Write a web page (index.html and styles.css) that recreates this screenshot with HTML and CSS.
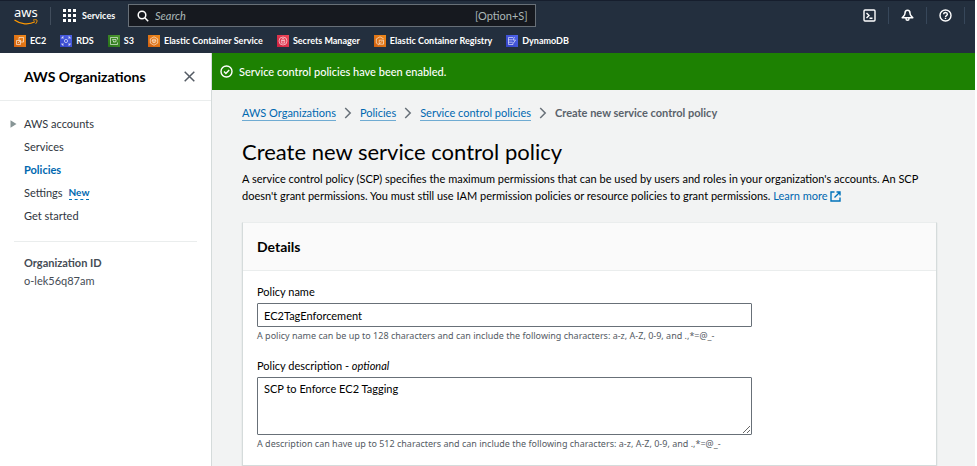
FILE: index.html
```html
<!DOCTYPE html>
<html lang="en">
<head>
<meta charset="utf-8">
<title>Create new service control policy</title>
<link rel="stylesheet" href="styles.css">
</head>
<body>
<header class="topbar">
  <div class="topbar-row">
    <a class="logo" href="#" aria-label="AWS">
      <span class="logo-word">aws</span>
      <svg class="logo-smile" width="24" height="6" viewBox="0 0 24 6" fill="none" stroke="#f90"><path d="M.5 1C6.500 5.500 15 6 21 2.800" stroke-width="1.200"/><path d="M19 1.200c2-.7 3.700-.6 4 0s-.2 2.300-1.300 3.600" stroke-width="1"/></svg>
    </a>
    <button class="services" type="button">
      <svg width="13" height="13" viewBox="0 0 13 13" fill="#fff"><path d="M0 0h3v3H0zM5 0h3v3H5zM10 0h3v3h-3zM0 5h3v3H0zM5 5h3v3H5zM10 5h3v3h-3zM0 10h3v3H0zM5 10h3v3H5zM10 10h3v3h-3z"/></svg>
      Services
    </button>
    <label class="search">
      <svg width="12" height="12" viewBox="0 0 12 12" fill="none" stroke="#fff" stroke-width="1.500"><circle cx="5" cy="5" r="3.800"/><path d="M7.800 7.800l3.400 3.400"/></svg>
      <input type="search" placeholder="Search" aria-label="Search">
      <span class="search-hint">[Option+S]</span>
    </label>
    <div class="tools">
      <button type="button" aria-label="CloudShell"><svg width="13" height="13" viewBox="0 0 13 13" fill="none" stroke="#fff" stroke-width="1.400"><rect x="1" y="1" width="11" height="11" rx="1"/><path d="M3.500 4l2.500 2.500L3.500 9M6.500 9.300h3"/></svg></button>
      <button type="button" aria-label="Notifications"><svg width="13" height="13" viewBox="0 0 13 13" fill="none" stroke="#fff" stroke-width="1.500" stroke-linejoin="round"><path d="M6.500 1.200C4.600 1.200 4 2.800 4 4.200 4 6.500 2.500 7.300 1.200 8.800h10.600C10.500 7.300 9 6.500 9 4.200c0-1.400-.6-3-2.500-3zM5 9.500c0 1 .6 1.800 1.500 1.800S8 10.500 8 9.500"/></svg></button>
      <button type="button" aria-label="Help"><svg width="13" height="13" viewBox="0 0 13 13" fill="none" stroke="#fff" stroke-width="1.400"><circle cx="6.500" cy="6.500" r="5.500"/><path d="M4.700 5.200c0-2.400 3.700-2.300 3.700 0 0 1.400-1.900 1.300-1.900 2.700M6.500 8.700v1.300"/></svg></button>
    </div>
  </div>
  <nav class="favorites" aria-label="Favorites">
    <a href="#"><svg class="orange" viewBox="0 0 12 12"><path d="M2.500 5.500h4v4h-4zM5 5.500v-3h4.500V7h-3M4 8l2.500-2.500"/></svg>EC2</a>
    <a href="#"><svg class="blue" viewBox="0 0 12 12"><path d="M2 4V2h2M8 2h2v2M10 8v2H8M4 10H2V8M2 2l1.500 1.500M10 2L8.500 3.500M2 10l1.500-1.500M10 10L8.500 8.500"/><circle cx="6" cy="6" r="1.600"/></svg>RDS</a>
    <a href="#"><svg class="green" viewBox="0 0 12 12"><path d="M9.500 4.500v-2h-7v7h7v-2M4.500 4.500h3.500v2.300H5.500M4.500 4.500L6 7.500"/></svg>S3</a>
    <a href="#"><svg class="orange" viewBox="0 0 12 12"><path d="M6 1.800l3.700 2.100v4.200L6 10.200 2.300 8.100V3.900zM6 4l1.800 1v2L6 8 4.200 7V5zM6 6v2M6 6l1.800-1M6 6L4.200 5"/></svg>Elastic Container Service</a>
    <a href="#"><svg class="red" viewBox="0 0 12 12"><path d="M4.300 5.500h3.400v2.600H4.300zM5 5.500V4.300c0-1.200 2-1.200 2 0v1.200M6 6.300v1"/><circle cx="6" cy="6" r="4"/></svg>Secrets Manager</a>
    <a href="#"><svg class="orange" viewBox="0 0 12 12"><path d="M5 10L2.300 8.100V3.900L6 1.800l3.700 2.100M5.200 5.200h4.300v4H5.200zM5.200 9.200l3-3"/></svg>Elastic Container Registry</a>
    <a href="#"><svg class="blue" viewBox="0 0 12 12"><path d="M2.500 2.500H7M2.500 2.500v7H7v-2M2.500 4.800h4M2.500 7.200h4M8.500 2L7 5h2.500L7.500 8"/></svg>DynamoDB</a>
  </nav>
</header>
<div class="layout">
  <aside class="sidebar">
    <div class="sidebar-head">
      <h2>AWS Organizations</h2>
      <button class="close" type="button" aria-label="Close navigation"><svg width="11" height="11" viewBox="0 0 11 11" stroke="#545b64" stroke-width="1.500"><path d="M.7.7l9.600 9.600M10.300.7L.7 10.300"/></svg></button>
    </div>
    <nav class="sidebar-nav" aria-label="AWS Organizations">
      <a class="has-arrow" href="#"><svg width="7" height="8" viewBox="0 0 7 8"><path d="M.5.3v7.400L6.500 4z" fill="#879596"/></svg>AWS accounts</a>
      <a href="#">Services</a>
      <a class="current" href="#" aria-current="page">Policies</a>
      <div class="nav-line"><a href="#">Settings</a><a class="new" href="#">New</a></div>
      <a href="#">Get started</a>
    </nav>
    <dl class="org">
      <dt>Organization ID</dt>
      <dd>o-lek56q87am</dd>
    </dl>
  </aside>
  <main class="main">
    <div class="flash" role="status">
      <svg width="13" height="13" viewBox="0 0 13 13" fill="none" stroke="#fff" stroke-width="1.400"><circle cx="6.500" cy="6.500" r="5.500"/><path d="M4 6.500l1.900 1.900L9.200 5"/></svg>
      Service control policies have been enabled.
    </div>
    <div class="content">
      <nav class="crumbs" aria-label="Breadcrumbs">
        <a href="#">AWS Organizations</a>
        <svg width="8" height="12" viewBox="0 0 8 12"><path d="M1.200 1l5 5-5 5"/></svg>
        <a href="#">Policies</a>
        <svg width="8" height="12" viewBox="0 0 8 12"><path d="M1.200 1l5 5-5 5"/></svg>
        <a href="#">Service control policies</a>
        <svg width="8" height="12" viewBox="0 0 8 12"><path d="M1.200 1l5 5-5 5"/></svg>
        <span>Create new service control policy</span>
      </nav>
      <h1>Create new service control policy</h1>
      <p class="intro">A service control policy (SCP) specifies the maximum permissions that can be used by users and roles in your organization's accounts. An SCP<br> doesn't grant permissions. You must still use IAM permission policies or resource policies to grant permissions. <a href="#">Learn more <svg width="11" height="11" viewBox="0 0 11 11" fill="none" stroke="#0073bb" stroke-width="1.400"><path d="M4.500 1H1v9h9V6.500M6.500 1H10v3.500M10 1L4.500 6.500"/></svg></a></p>
      <section class="card">
        <h2>Details</h2>
        <form class="fields">
          <div class="field">
            <label for="name">Policy name</label>
            <input id="name" type="text" value="EC2TagEnforcement">
            <p>A policy name can be up to 128 characters and can include the following characters: a-z, A-Z, 0-9, and .,*=@_-</p>
          </div>
          <div class="field">
            <label for="desc">Policy description - <i>optional</i></label>
            <textarea id="desc">SCP to Enforce EC2 Tagging</textarea>
            <p>A description can have up to 512 characters and can include the following characters: a-z, A-Z, 0-9, and .,*=@_-</p>
          </div>
        </form>
      </section>
    </div>
  </main>
</div>
</body>
</html>
```
FILE: styles.css
```css
* { box-sizing: border-box; }
body {
  margin: 0;
  padding-right: 2px;
  min-height: 100vh;
  display: flex;
  flex-direction: column;
  background: #fff;
  color: #000;
  font: 400 11px/16px Lato, "Noto Sans", sans-serif;
}
h1, h2, p, dl, dd { margin: 0; }
a { color: #0068b0; text-decoration: none; }
button { padding: 0; border: 0; background: none; color: inherit; font: inherit; }
input, textarea { font: inherit; color: inherit; }
svg { flex: none; }

.topbar { padding-bottom: 1px; background: #232f3e; border-top: 1px solid #161e2d; color: #fff; }
.topbar-row { display: flex; align-items: center; height: 29px; }
.logo { width: 37px; margin-left: 14px; height: 18px; border-right: 1px solid #414d5c; display: flex; flex-direction: column; color: #fff; }
.logo-word { font: 400 13px/10px "Noto Sans", sans-serif; }
.logo-smile { margin-top: 2px; }
.services { display: flex; align-items: center; gap: 6px; margin-left: 12px; width: 53px; font-weight: 700; font-size: 9px; }
.search { display: flex; align-items: center; flex: none; width: 41.8%; height: 23px; margin-left: 12px; padding: 0 7px 0 8px; background: #16191f; border: 1px solid #687078; }
.search input { flex: 1; min-width: 0; border: 0; padding: 0 6px; background: none; outline: 0; font-size: 11px; }
.search input::placeholder { color: #aab7b8; font-style: italic; opacity: 1; }
.search-hint { color: #aab7b8; }
.tools { display: flex; margin-left: auto; margin-right: 10px; }
.tools button { display: flex; justify-content: center; align-items: center; width: 38px; height: 17px; border-right: 1px solid #37475a; }
.favorites { display: flex; gap: 14px; height: 22px; padding-left: 14px; align-items: center; }
.favorites a { display: flex; align-items: center; gap: 4px; color: #fff; font-size: 9px; font-weight: 700; }
.favorites svg { width: 12px; height: 12px; fill: none; stroke: rgba(255, 255, 255, 0.85); stroke-width: 0.7; }
.orange { background: linear-gradient(45deg, #d06010, #f08a1c); }
.blue { background: linear-gradient(45deg, #3343c4, #4f64ea); }
.green { background: linear-gradient(45deg, #257018, #4f9a30); }
.red { background: linear-gradient(45deg, #cc2040, #f04858); }

.layout { flex: 1; display: grid; grid-template-columns: 212px minmax(0, 1fr); }
.sidebar { background: #fff; border-right: 1px solid #d5dbdb; }
.sidebar-head { display: flex; align-items: center; justify-content: space-between; height: 48px; padding: 0 16px 0 24px; border-bottom: 1px solid #eaeded; }
.sidebar-head h2 { font-size: 14px; font-weight: 700; }
.close { display: flex; }
.sidebar-nav { display: flex; flex-direction: column; margin: 0 14px; padding: 11px 0 14px 10px; border-bottom: 1px solid #eaeded; line-height: 23px; }
.sidebar-nav a { color: #30363e; }
.sidebar-nav .has-arrow { display: flex; align-items: center; gap: 7px; margin-left: -14px; }
.sidebar-nav .current { color: #0068b0; font-weight: 700; }
.nav-line { display: flex; align-items: center; gap: 6px; }
.sidebar-nav .new { color: #0068b0; font-size: 10px; font-weight: 700; line-height: 14px; border-bottom: 1px dashed #0073bb; }
.org { padding: 12px 24px; line-height: 18px; color: #454c55; }
.org dt { font-weight: 700; }

.main { background: #f2f3f3; }
.flash { display: flex; align-items: center; gap: 6px; height: 37px; padding-left: 8px; background: #1d8102; color: #fff; font-weight: 500; }
.content { padding: 15px 38px 0 30px; }
.crumbs { display: flex; align-items: center; gap: 8px; }
.crumbs a { line-height: 14px; border-bottom: 1px solid #6fabd2; }
.crumbs svg { fill: none; stroke: #687078; stroke-width: 1.5; }
.crumbs span { color: #5a626b; font-weight: 700; }
h1 { margin-top: 15px; font-size: 22px; line-height: 32px; font-weight: 400; }
.intro { margin-top: 2px; line-height: 17px; white-space: nowrap; }
.intro svg { vertical-align: -2px; }
.card { margin-top: 18px; background: #fff; border: 1px solid #d5dbdb; border-top-color: #eaeded; box-shadow: 0 1px 1px #c5cccc; }
.card h2 { padding: 0 14px; background: #fafafa; border-bottom: 1px solid #eaeded; font-size: 14px; line-height: 47px; font-weight: 700; }
.fields { padding: 13px 14px 12px; display: flex; flex-direction: column; gap: 13px; }
.field { width: 74.4%; }
.field label, .field input, .field textarea { display: block; }
.field input, .field textarea { width: 100%; padding: 0 6px; background: #fff; border: 1px solid #687078; border-radius: 1px; outline: 0; }
.field input, .field textarea { margin-top: 3px; }
.field input { height: 24px; }
.field textarea { height: 58px; padding-top: 3px; resize: vertical; }
.field p { font: 400 9px/18px "Noto Sans", sans-serif; color: #545b64; }
```
